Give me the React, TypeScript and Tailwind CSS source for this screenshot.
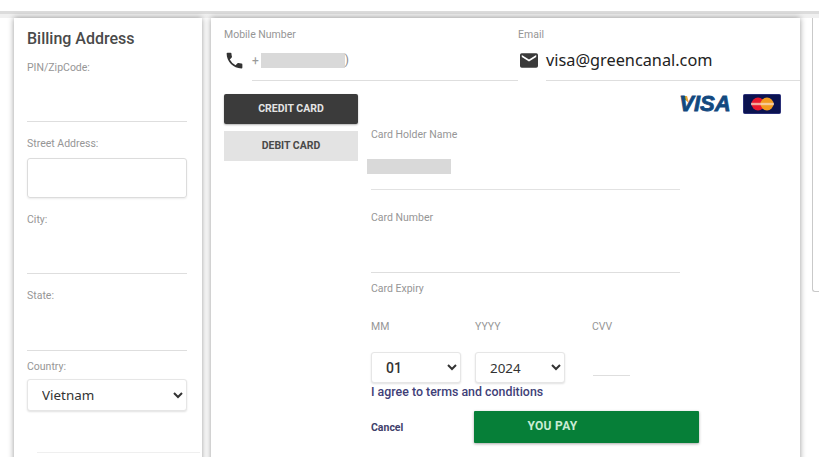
const font = "font-['Roboto',sans-serif]";

function Label({ children, className = "" }: { children: React.ReactNode; className?: string }) {
  return <div className={`text-[10.5px] leading-[14px] text-[#969696] ${className}`}>{children}</div>;
}

function Select({ value, options, className }: { value: string; options: string[]; className: string }) {
  return (
    <select
      defaultValue={value}
      className={`rounded-[3px] border border-[#e6e6e6] bg-white text-[#333] shadow-[0_1px_2px_rgba(0,0,0,0.12)] outline-none ${className}`}
    >
      {options.map((o) => (
        <option key={o}>{o}</option>
      ))}
    </select>
  );
}

function BillingCard() {
  return (
    <aside className="flex h-[446px] w-[188px] shrink-0 flex-col bg-white pl-[13px] pr-[15px] pt-[11px] shadow-[0_0_6px_rgba(0,0,0,0.4)]">
      <h2 className="text-[16px] font-medium leading-[20px] text-[#4a4a4a]">Billing Address</h2>
      <Label className="mt-[12px]">PIN/ZipCode:</Label>
      <div className="mt-[46px] h-px bg-[#dedede]" />
      <Label className="mt-[15px]">Street Address:</Label>
      <div className="mt-[7px] h-[40px] rounded-[3px] border border-[#dcdcdc] shadow-[0_1px_2px_rgba(0,0,0,0.08)]" />
      <Label className="mt-[15px]">City:</Label>
      <div className="mt-[46px] h-px bg-[#dedede]" />
      <Label className="mt-[15px]">State:</Label>
      <div className="mt-[47px] h-px bg-[#dedede]" />
      <Label className="mt-[9px]">Country:</Label>
      <Select
        value="Vietnam"
        options={["Vietnam"]}
        className="mt-[5px] h-[32px] w-full pl-[10px] font-['Noto_Sans',sans-serif] text-[13.4px]"
      />
      <div className="ml-[10px] mr-[-13px] mt-[41px] h-px bg-[#efefef]" />
    </aside>
  );
}

function PaymentCard() {
  return (
    <main className="flex h-[446px] w-[589px] shrink-0 flex-col bg-white pl-[13px] shadow-[0_0_6px_rgba(0,0,0,0.4)]">
      <div className="flex h-[63px] items-start">
        <div className="flex w-[294px] flex-col pt-[10px]">
          <Label>Mobile Number</Label>
          <div className="mt-[8px] flex items-center">
            <svg viewBox="0 0 24 24" className="h-[21px] w-[21px] fill-[#333]">
              <path d="M6.62 10.79a15.05 15.05 0 0 0 6.59 6.59l2.2-2.2a1 1 0 0 1 1.02-.24c1.12.37 2.33.57 3.57.57a1 1 0 0 1 1 1V20a1 1 0 0 1-1 1C10.61 21 3 13.39 3 4a1 1 0 0 1 1-1h3.5a1 1 0 0 1 1 1c0 1.25.2 2.45.57 3.57a1 1 0 0 1-.25 1.02z" />
            </svg>
            <span className="ml-[7px] text-[12px] text-[#999]">+</span>
            <span className="ml-[2px] h-[15px] w-[84px] bg-[#d9d9d9]" />
            <span className="text-[12px] leading-[15px] text-[#888]">)</span>
          </div>
          <div className="ml-[28px] mt-[9px] h-px bg-[#dedede]" />
        </div>
        <div className="flex flex-1 flex-col pt-[10px]">
          <Label>Email</Label>
          <div className="mt-[11px] flex h-[15px] items-center">
            <svg viewBox="2 4 20 16" className="ml-[2px] h-[15px] w-[18px] fill-[#3a3a3a]">
              <path d="M20 4H4a2 2 0 0 0-2 2v12a2 2 0 0 0 2 2h16a2 2 0 0 0 2-2V6a2 2 0 0 0-2-2zm0 4-8 5-8-5V6l8 5 8-5z" />
            </svg>
            <span className="ml-[8px] font-['Noto_Sans',sans-serif] text-[16.3px] text-[#222]">visa@greencanal.com</span>
          </div>
          <div className="ml-[28px] mt-[12px] h-px bg-[#dedede]" />
        </div>
      </div>
      <div className="flex">
        <div className="mt-[13px] flex w-[134px] shrink-0 flex-col gap-[7px] text-[10.5px] font-bold">
          <button className="h-[30px] rounded-[2px] bg-[#3b3b3b] text-[#e4e4e4] shadow-[0_1px_2px_rgba(0,0,0,0.3)]">
            CREDIT CARD
          </button>
          <button className="h-[30px] bg-[#e3e3e3] text-[#4a4a4a]">DEBIT CARD</button>
        </div>
        <div className="ml-[13px] flex flex-1 flex-col pt-[13px]">
          <div className="flex h-[20px] items-center justify-end gap-[11px] pr-[19px]">
            <svg viewBox="0 0 54 26" className="h-[26px] w-[54px]">
              <path d="M2 5h7l2 7z" fill="#e9a33a" />
              <text
                x="27"
                y="20"
                textAnchor="middle"
                fontFamily="Liberation Sans"
                fontStyle="italic"
                fontWeight="700"
                fontSize="22"
                fill="#12497f"
                stroke="#12497f"
                strokeWidth="0.8"
              >
                VISA
              </text>
            </svg>
            <svg viewBox="0 0 38 20" className="h-[20px] w-[38px]">
              <rect x="0.5" y="0.5" width="37" height="19" rx="1" fill="#0b1350" stroke="#2a2f78" />
              <circle cx="15" cy="10" r="6.5" fill="#e8172c" />
              <circle cx="24" cy="10" r="6.5" fill="#f39c1f" />
              <rect x="8" y="8.8" width="23" height="2.4" fill="#f8d9c0" opacity="0.75" />
            </svg>
          </div>
          <Label className="mt-[14px]">Card Holder Name</Label>
          <div className="-ml-[4px] mt-[17px] h-[15px] w-[84px] bg-[#d9d9d9]" />
          <div className="mt-[15px] h-px w-[309px] bg-[#e2e2e2]" />
          <Label className="mt-[21px]">Card Number</Label>
          <div className="mt-[47px] h-px w-[309px] bg-[#dedede]" />
          <Label className="mt-[9px]">Card Expiry</Label>
          <div className="mt-[24px] flex">
            <Label className="w-[104px]">MM</Label>
            <Label className="w-[117px]">YYYY</Label>
            <Label>CVV</Label>
          </div>
          <div className="mt-[18px] flex items-start">
            <Select
              value="01"
              options={["01"]}
              className="h-[31px] w-[90px] pl-[10px] font-['Roboto',sans-serif] text-[14px] font-medium"
            />
            <Select
              value="2024"
              options={["2024"]}
              className="ml-[14px] h-[31px] w-[90px] pl-[10px] font-['Noto_Sans',sans-serif] text-[13.4px]"
            />
            <div className="ml-[28px] mt-[23px] h-px w-[37px] bg-[#dedede]" />
          </div>
          <div className="mt-[2px] text-[12.4px] font-medium leading-[14px] text-[#3f3f78]">I agree to terms and conditions</div>
          <div className="mt-[12px] flex items-center">
            <a className="mt-[2px] w-[103px] text-[10.5px] font-bold text-[#3f3f6b]">Cancel</a>
            <button className="h-[32px] w-[225px] rounded-[1px] bg-[#067f38] pb-[2px] pr-[68px] text-[12px] font-bold tracking-[0.3px] text-[#c9ecd4] shadow-[0_1px_3px_rgba(0,0,0,0.35)]">
              YOU PAY
            </button>
          </div>
        </div>
      </div>
    </main>
  );
}

export default function App() {
  return (
    <div className={`h-[457px] w-[819px] overflow-hidden bg-white ${font}`}>
      <div className="h-[11px] bg-white" />
      <div className="h-[7px] border-t-[3px] border-[#dcdcdc] bg-[#f0f0f0]" />
      <div className="flex gap-[9px] pl-[14px]">
        <BillingCard />
        <PaymentCard />
        <div className="ml-[3px] h-[274px] flex-1 rounded-bl-[3px] border-b border-l border-[#c9c9c9] bg-white" />
      </div>
    </div>
  );
}
